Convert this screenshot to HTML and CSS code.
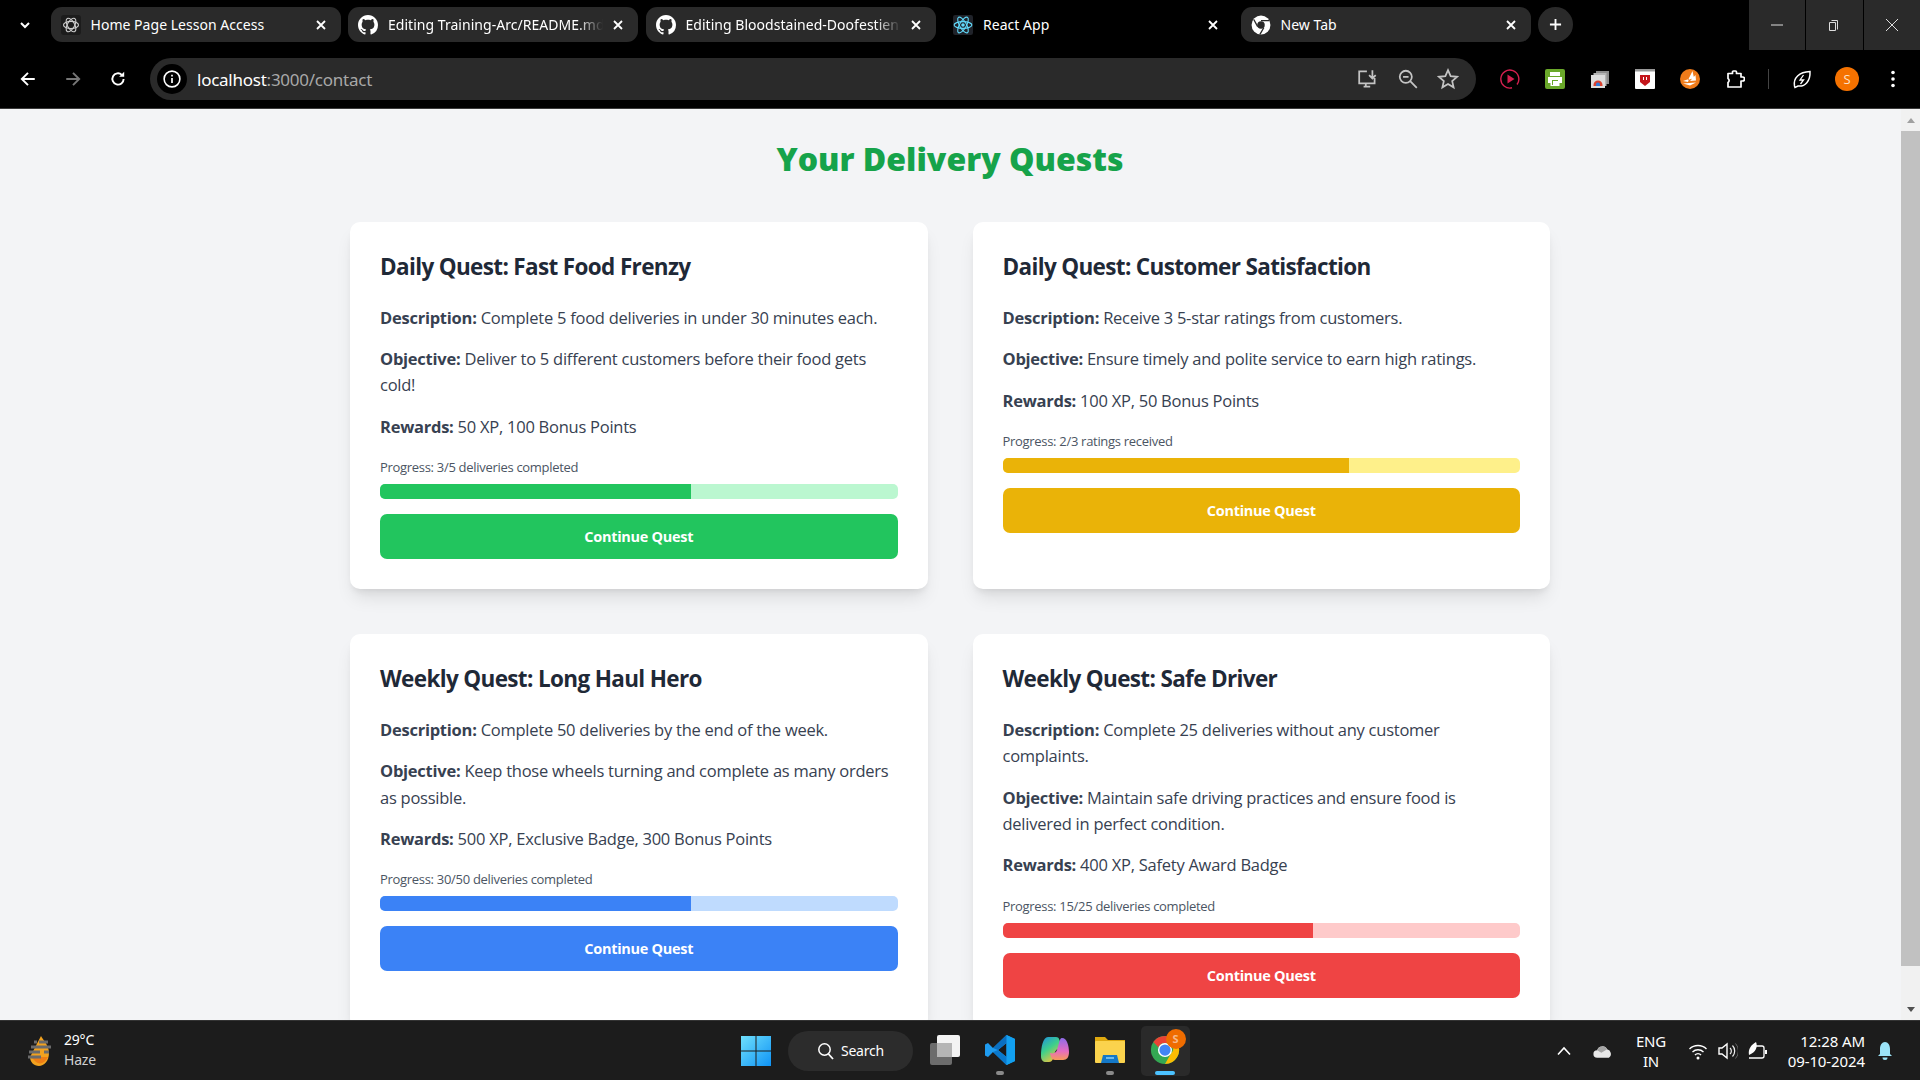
FILE: index.html
```html
<!DOCTYPE html>
<html lang="en">
<head>
<meta charset="utf-8">
<title>React App</title>
<link rel="stylesheet" href="styles.css">
</head>
<body>
<header class="chrome">
  <div class="tabstrip">
    <svg class="tabs-menu" viewBox="0 0 12 12"><path d="M2 4 6 8l4-4" fill="none" stroke="#fff" stroke-width="2"/></svg>
    <div class="tab on">
      <svg class="fav" viewBox="0 0 20 20"><rect width="20" height="20" rx="3" fill="#1c1c1c"/><g fill="none" stroke="#ccc" stroke-width="1.100"><ellipse cx="10" cy="10" rx="7.500" ry="3.600"/><ellipse cx="10" cy="10" rx="7.500" ry="3.600" transform="rotate(60 10 10)"/><ellipse cx="10" cy="10" rx="7.500" ry="3.600" transform="rotate(120 10 10)"/></g></svg>
      <span class="tab-label">Home Page Lesson Access</span><svg class="x" viewBox="0 0 10 10"><path d="M1 1l8 8M9 1 1 9"/></svg>
    </div>
    <div class="tab on">
      <svg class="fav" viewBox="0 0 16 16"><path fill="#fff" d="M8 0C3.580 0 0 3.580 0 8c0 3.540 2.290 6.530 5.470 7.590.4.070.55-.17.55-.38 0-.19-.01-.82-.01-1.490-2.010.37-2.530-.49-2.690-.94-.09-.23-.48-.94-.82-1.130-.28-.15-.68-.52-.01-.53.63-.01 1.080.58 1.230.82.720 1.210 1.870.87 2.330.66.070-.52.280-.87.510-1.070-1.780-.2-3.640-.89-3.640-3.950 0-.87.310-1.590.820-2.150-.08-.2-.360-1.020.080-2.120 0 0 .670-.21 2.200.820.640-.18 1.320-.27 2-.27s1.360.09 2 .27c1.530-1.040 2.200-.82 2.200-.82.440 1.100.160 1.920.080 2.120.510.560.820 1.270.820 2.150 0 3.070-1.870 3.750-3.650 3.950.290.250.540.730.540 1.480 0 1.070-.01 1.930-.01 2.200 0 .210.150.460.550.380A8.010 8.010 0 0 0 16 8c0-4.420-3.580-8-8-8z"/></svg>
      <span class="tab-label fade">Editing Training-Arc/README.md</span><svg class="x" viewBox="0 0 10 10"><path d="M1 1l8 8M9 1 1 9"/></svg>
    </div>
    <div class="tab on">
      <svg class="fav" viewBox="0 0 16 16"><path fill="#fff" d="M8 0C3.580 0 0 3.580 0 8c0 3.540 2.290 6.530 5.470 7.590.4.070.55-.17.55-.38 0-.19-.01-.82-.01-1.490-2.010.37-2.530-.49-2.690-.94-.09-.23-.48-.94-.82-1.130-.28-.15-.68-.52-.01-.53.63-.01 1.080.58 1.230.82.720 1.210 1.870.87 2.330.66.070-.52.280-.87.510-1.070-1.780-.2-3.640-.89-3.640-3.950 0-.87.310-1.590.820-2.150-.08-.2-.360-1.020.080-2.120 0 0 .670-.21 2.200.820.640-.18 1.320-.27 2-.27s1.360.09 2 .27c1.530-1.040 2.200-.82 2.200-.82.440 1.100.160 1.920.080 2.120.510.560.820 1.270.820 2.150 0 3.070-1.870 3.750-3.650 3.950.290.250.540.730.540 1.480 0 1.070-.01 1.930-.01 2.200 0 .210.150.460.550.380A8.010 8.010 0 0 0 16 8c0-4.420-3.580-8-8-8z"/></svg>
      <span class="tab-label fade">Editing Bloodstained-Doofestien</span><svg class="x" viewBox="0 0 10 10"><path d="M1 1l8 8M9 1 1 9"/></svg>
    </div>
    <div class="tab">
      <svg class="fav" viewBox="0 0 18 18"><rect width="18" height="18" rx="2" fill="#20232a"/><g fill="none" stroke="#61dafb"><ellipse cx="9" cy="9" rx="8" ry="3"/><ellipse cx="9" cy="9" rx="8" ry="3" transform="rotate(60 9 9)"/><ellipse cx="9" cy="9" rx="8" ry="3" transform="rotate(120 9 9)"/></g><circle cx="9" cy="9" r="1.600" fill="#61dafb"/></svg>
      <span class="tab-label">React App</span><svg class="x" viewBox="0 0 10 10"><path d="M1 1l8 8M9 1 1 9"/></svg>
    </div>
    <div class="tab on">
      <svg class="fav" viewBox="0 0 18 18"><circle cx="9" cy="9" r="8.500" fill="#fff"/><circle cx="9" cy="9" r="3.400" fill="#2a2a2a"/><path d="M9 5h7.500M6 10.500 2.500 4M11.500 11.500 8 17.500" stroke="#2a2a2a" stroke-width="1.200"/></svg>
      <span class="tab-label">New Tab</span><svg class="x" viewBox="0 0 10 10"><path d="M1 1l8 8M9 1 1 9"/></svg>
    </div>
    <div class="newtab"><svg viewBox="0 0 14 14"><path d="M7 1v12M1 7h12" stroke="#fff" stroke-width="2"/></svg></div>
    <div class="winbtns">
      <div class="winbtn"><svg viewBox="0 0 14 14"><path d="M1 7h12" stroke="#ddd"/></svg></div>
      <div class="winbtn"><svg viewBox="0 0 14 14"><path d="M4.500 2.500h6v9M2.500 4.500h6v8h-6z" fill="none" stroke="#ddd"/></svg></div>
      <div class="winbtn"><svg viewBox="0 0 14 14"><path d="M1 1l12 12M13 1 1 13" stroke="#ddd"/></svg></div>
    </div>
  </div>
  <div class="toolbar">
    <svg class="nav" viewBox="0 0 16 16"><path d="M14 8H2.500M8 2.500 2.500 8 8 13.500" fill="none" stroke="#fff" stroke-width="1.700"/></svg>
    <svg class="nav" viewBox="0 0 16 16"><path d="M2 8h11.500M8 2.500 13.500 8 8 13.500" fill="none" stroke="#777" stroke-width="1.700"/></svg>
    <svg class="nav" viewBox="0 0 16 16"><path d="M13 8a5 5 0 1 1-1.600-3.700" fill="none" stroke="#fff" stroke-width="1.700"/><path d="M13.500 1.500v4.500H9z" fill="#fff"/></svg>
    <div class="omnibox">
      <div class="site-info"><svg viewBox="0 0 16 16"><circle cx="8" cy="8" r="7" fill="none" stroke="#fff" stroke-width="1.400"/><path d="M8 7v4.500M8 4.300v1.500" stroke="#fff" stroke-width="1.500"/></svg></div>
      <span class="url">localhost<span class="url-dim">:3000/contact</span></span>
      <div class="omni-actions">
        <svg viewBox="0 0 20 20"><path d="M9 3H2v11h14v-5M6 17h6M8 14v3M14 2v7M11 6.500 14 9.500l3-3" fill="none" stroke="#c4c4c4" stroke-width="1.600"/></svg>
        <svg viewBox="0 0 20 20"><circle cx="8" cy="8" r="5.500" fill="none" stroke="#c4c4c4" stroke-width="1.600"/><path d="M12 12l6 6M5.500 8h5" stroke="#c4c4c4" stroke-width="1.600"/></svg>
        <svg viewBox="0 0 20 20"><path d="M10 2l2.400 5.400 5.800.6-4.400 3.900 1.300 5.700-5.100-3-5.100 3 1.300-5.700L1.800 8l5.800-.6z" fill="none" stroke="#c4c4c4" stroke-width="1.600"/></svg>
      </div>
    </div>
    <div class="exts">
      <svg viewBox="0 0 20 20"><path d="M12 18.800A9 9 0 1 1 17 15.500" fill="none" stroke="#d3204f" stroke-width="1.400"/><path d="M7.500 5.500 14.500 10l-7 4.500z" fill="#d3204f"/></svg>
      <svg viewBox="0 0 20 20"><rect width="20" height="20" rx="2" fill="#6aa82a"/><path d="M5 3h10v4H5zM3 8h14v6h-2.500v3h-9v-3H3z" fill="#fff"/><path d="M7 11h6v5H7z" fill="#6aa82a"/><path d="M8 12h5v5H8z" fill="#fff"/></svg>
      <svg viewBox="0 0 20 20"><rect x="6" y="2" width="13" height="13" fill="#8d8d8d"/><rect x="3.500" y="4" width="13" height="13" fill="#b5b5b5"/><rect x="1" y="6" width="14" height="13" fill="#ddd"/><path d="M3.500 16a4.500 4.500 0 0 1 9 0v1h-9z" fill="#d9412f"/><path d="M6 17v-1.500a2 2 0 0 1 4 0V17z" fill="#2f7bd9"/></svg>
      <svg viewBox="0 0 20 20"><rect width="20" height="20" rx="1" fill="#fff"/><rect width="20" height="2.500" fill="#999"/><path d="M5 6h10v7l-5 4-5-4z" fill="#c4161c"/><path d="M8 8h1v3H8zM11 8h1v3h-1z" fill="#fff"/></svg>
      <svg viewBox="0 0 20 20"><circle cx="10" cy="10" r="10" fill="#ef7b1a"/><path d="M12.500 2 8 11l6-2zM15.500 6 10 12l6-.5zM3 12l6-2-1 3zM3 14.500l13-1-6 3z" fill="#fff"/></svg>
      <svg viewBox="0 0 20 20"><path d="M3 4.500h4.500V3a1 1 0 0 1 1-1h2a1 1 0 0 1 1 1v1.500H16V8h1.500a2 2 0 0 1 0 4H16v6H3v-4.500c1.500-1 1.500-3 0-4z" fill="none" stroke="#fff" stroke-width="1.700" stroke-linejoin="round"/></svg>
      <span class="ext-sep"></span>
      <svg viewBox="0 0 20 20"><path d="M2.500 17C1 9 7 3 18 2.500 18.500 12 13 18 6 17l-3 1.500z" fill="none" stroke="#fff" stroke-width="1.500"/><path d="M11.500 6 8 11h3.500L8.500 15" fill="none" stroke="#fff" stroke-width="1.300"/></svg>
      <span class="avatar">S</span>
      <svg class="kebab" viewBox="0 0 6 20"><circle cx="3" cy="3.500" r="1.800" fill="#fff"/><circle cx="3" cy="10" r="1.800" fill="#fff"/><circle cx="3" cy="16.500" r="1.800" fill="#fff"/></svg>
    </div>
  </div>
</header>

<div class="viewport">
  <main class="page">
    <h1 class="page-title">Your Delivery Quests</h1>
    <div class="quests">
      <article class="card">
        <h2 class="card-title">Daily Quest: Fast Food Frenzy</h2>
        <p class="line"><strong>Description:</strong> Complete 5 food deliveries in under 30 minutes each.</p>
        <p class="line"><strong>Objective:</strong> Deliver to 5 different customers before their food gets cold!</p>
        <p class="line"><strong>Rewards:</strong> 50 XP, 100 Bonus Points</p>
        <p class="progress-label">Progress: 3/5 deliveries completed</p>
        <div class="track green-t"><div class="fill green" style="width:60%"></div></div>
        <button class="cta green">Continue Quest</button>
      </article>
      <article class="card">
        <h2 class="card-title">Daily Quest: Customer Satisfaction</h2>
        <p class="line"><strong>Description:</strong> Receive 3 5-star ratings from customers.</p>
        <p class="line"><strong>Objective:</strong> Ensure timely and polite service to earn high ratings.</p>
        <p class="line"><strong>Rewards:</strong> 100 XP, 50 Bonus Points</p>
        <p class="progress-label">Progress: 2/3 ratings received</p>
        <div class="track yellow-t"><div class="fill yellow" style="width:67%"></div></div>
        <button class="cta yellow">Continue Quest</button>
      </article>
      <article class="card">
        <h2 class="card-title">Weekly Quest: Long Haul Hero</h2>
        <p class="line"><strong>Description:</strong> Complete 50 deliveries by the end of the week.</p>
        <p class="line"><strong>Objective:</strong> Keep those wheels turning and complete as many orders as possible.</p>
        <p class="line"><strong>Rewards:</strong> 500 XP, Exclusive Badge, 300 Bonus Points</p>
        <p class="progress-label">Progress: 30/50 deliveries completed</p>
        <div class="track blue-t"><div class="fill blue" style="width:60%"></div></div>
        <button class="cta blue">Continue Quest</button>
      </article>
      <article class="card">
        <h2 class="card-title">Weekly Quest: Safe Driver</h2>
        <p class="line"><strong>Description:</strong> Complete 25 deliveries without any customer complaints.</p>
        <p class="line"><strong>Objective:</strong> Maintain safe driving practices and ensure food is delivered in perfect condition.</p>
        <p class="line"><strong>Rewards:</strong> 400 XP, Safety Award Badge</p>
        <p class="progress-label">Progress: 15/25 deliveries completed</p>
        <div class="track red-t"><div class="fill red" style="width:60%"></div></div>
        <button class="cta red">Continue Quest</button>
      </article>
    </div>
  </main>
  <aside class="scrollbar">
    <span class="arrow up"></span>
    <div class="thumb"></div>
    <span class="arrow down"></span>
  </aside>
</div>

<footer class="taskbar">
  <div class="weather">
    <svg viewBox="0 0 26 32"><path d="M14 1c2 4 8 9 8 17s-5 13-10 13S3 27 3 22z" fill="#f2a21f"/><path d="M9 27c4 3 9 1 12-5H4z" fill="#ef7d14"/><path d="M7 7h3M12 7h9M4 12h20M2 17h11M17 17h5M1 22h13" stroke="#6b6b6b" stroke-width="3"/></svg>
    <div class="weather-text"><span>29°C</span><span class="dim">Haze</span></div>
  </div>
  <div class="task-center">
    <svg class="start" viewBox="0 0 30 30"><defs><linearGradient id="win" x1="0" y1="0" x2="1" y2="1"><stop offset="0" stop-color="#6fe0fc"/><stop offset="1" stop-color="#0f93f5"/></linearGradient></defs><path fill="url(#win)" d="M0 0h14.500v14.500H0zM15.500 0H30v14.500H15.500zM0 15.500h14.500V30H0zM15.500 15.500H30V30H15.500z"/></svg>
    <div class="search"><svg viewBox="0 0 18 18"><circle cx="7.500" cy="7.500" r="5.700" fill="none" stroke="#fff" stroke-width="1.500"/><path d="M11.500 12l4.500 5" stroke="#fff" stroke-width="1.800"/></svg><span>Search</span></div>
    <div class="task-app"><svg viewBox="0 0 30 30"><rect x="0" y="8" width="22" height="22" rx="2" fill="#6c6c6c"/><rect x="7" y="0" width="23" height="22" rx="2" fill="#f3f3f3"/><rect x="7" y="8" width="15" height="14" fill="#b5b5b5"/></svg></div>
    <div class="task-app"><svg viewBox="0 0 30 30"><path d="M21.500 0 30 4v22l-8.500 4L8 17l-5 5-3-1.500v-11L3 8l5 5z" fill="#1f9cf0"/><path d="M21.500 8 13 15l8.500 7z" fill="#1a1a1a"/><path d="M21.500 0 30 4v22l-8.500 4z" fill="#12a0f0"/><path d="M21.500 0v8L13 15 8 13z" fill="#0a6fc0"/><path d="M21.500 30v-8L13 15l-5 2z" fill="#0a78cc"/></svg><i class="dot"></i></div>
    <div class="task-app"><svg viewBox="0 0 30 30"><defs><linearGradient id="cpa" x1="0" y1="0" x2=".6" y2="1"><stop offset="0" stop-color="#1d8fe0"/><stop offset=".5" stop-color="#3fd08a"/><stop offset="1" stop-color="#f5c33b"/></linearGradient><linearGradient id="cpb" x1=".5" y1="0" x2=".5" y2="1"><stop offset="0" stop-color="#8e6be8"/><stop offset=".6" stop-color="#e56cc0"/><stop offset="1" stop-color="#f79a5a"/></linearGradient></defs><path d="M8 2h8c2 0 3 1 3.500 3L22 14c-3-1-6 0-7 3l-2 7c-1 2-2 3-4 3H6c-3 0-5-2-5-6C1 12 3 2 8 2z" fill="url(#cpa)"/><path d="M22 3c5 0 7 8 7 14 0 5-2 8-6 8h-8c-2 0-3-1-4-3l-1-4c3 1 6 0 7-3l2-7c.5-3 1.500-5 3-5z" fill="url(#cpb)"/></svg></div>
    <div class="task-app"><svg viewBox="0 0 30 30"><path d="M0 2h10l3 3h17v22H0z" fill="#e0a90f"/><rect y="6" width="30" height="22" rx="1" fill="#fbd34d"/><path d="M8 20h14l2 8H6z" fill="#1478c7"/><path d="M11 23h8" stroke="#8fd0f5" stroke-width="1.500"/></svg><i class="dot"></i></div>
    <div class="task-app active"><svg class="chrome-logo" viewBox="0 0 32 32"><circle cx="16" cy="16" r="15" fill="#34a853"/><path d="M16 1a15 15 0 0 1 13 7.500H16a7.500 7.500 0 0 0-7 4.500L3.500 7.500A15 15 0 0 1 16 1z" fill="#ea4335"/><path d="M29 8.500A15 15 0 0 1 16 31l6.500-11.500a7.500 7.500 0 0 0 0-11z" fill="#fbbc04"/><circle cx="16" cy="16" r="7.500" fill="#fff"/><circle cx="16" cy="16" r="6" fill="#4285f4"/></svg><span class="task-badge">S</span><i class="bar"></i></div>
  </div>
  <div class="tray">
    <svg class="chev" viewBox="0 0 14 14"><path d="M1 10.500 7 4l6 6.500" fill="none" stroke="#fff" stroke-width="1.600"/></svg>
    <svg class="cloud" viewBox="0 0 24 18"><path d="M5 17a4.500 4.500 0 0 1 0-9 6.500 6.500 0 0 1 12-1 5.500 5.500 0 0 1 2 10z" fill="#e8e8e8"/><path d="M5 8a6.500 6.500 0 0 1 12-1l-7 4z" fill="#a5a5a5"/></svg>
    <div class="lang"><span>ENG</span><span>IN</span></div>
    <svg class="sys" viewBox="0 0 20 20"><path d="M1.500 8a12 12 0 0 1 17 0M4.500 11a8 8 0 0 1 11 0M7 14a4 4 0 0 1 6 0" fill="none" stroke="#fff" stroke-width="1.400"/><circle cx="10" cy="17" r="1.500" fill="#fff"/></svg>
    <svg class="sys" viewBox="0 0 20 20"><path d="M1 7h3l5-4v14l-5-4H1z" fill="none" stroke="#fff" stroke-width="1.400"/><path d="M12 7a4 4 0 0 1 0 6M14.500 4.500a8 8 0 0 1 0 11" fill="none" stroke="#eee" stroke-width="1.200"/><path d="M17.500 2.500a11 11 0 0 1 0 15" fill="none" stroke="#666"/></svg>
    <svg class="sys" viewBox="0 0 20 20"><path d="M6 5h8a2 2 0 0 1 2 2v8a2 2 0 0 1-2 2H1" fill="none" stroke="#fff" stroke-width="1.300"/><path d="M17 9h2v4h-2zM1 14C0 8 3 4 8 1c2 5 0 10-7 13z" fill="#fff"/></svg>
    <div class="clock"><span>12:28 AM</span><span>09-10-2024</span></div>
    <svg class="bell" viewBox="0 0 16 20"><path d="M8 1c3 0 5 3 5 7v5l2 2H1l2-2V8c0-4 2-7 5-7z" fill="#9be3f7"/><path d="M5.500 16.500h5a2.500 2.500 0 0 1-5 0z" fill="#9be3f7"/></svg>
  </div>
</footer>
</body>
</html>
```
FILE: styles.css
```css
* { box-sizing: border-box; }
html, body { margin: 0; height: 100%; overflow: hidden; }
body {
  display: flex;
  flex-direction: column;
  height: 1080px;
  font-family: "Open Sans", "Noto Sans", "Liberation Sans", sans-serif;
  background: #000;
}

/* Browser chrome */
.chrome { height: 109px; flex: none; background: #000; color: #fff; border-bottom: 1px solid #3a3a3a; }
.tabstrip { height: 50px; display: flex; align-items: flex-start; padding: 7px 0 0 19px; gap: 7.500px; position: relative; }
.tabs-menu { width: 12px; height: 12px; margin: 12px 12px 0 0; flex: none; }
.tab { width: 290px; height: 35px; border-radius: 11px; display: flex; align-items: center; padding: 0 15px 0 10px; gap: 10px; font-size: 14px; flex: none; }
.tab.on { background: #2a2a2a; }
.fav { width: 20px; height: 20px; flex: none; }
.tab-label { flex: 1; white-space: nowrap; overflow: hidden; font-family: "Noto Sans", sans-serif; font-size: 14px; letter-spacing: .03px; }
.tab-label.fade { -webkit-mask-image: linear-gradient(90deg, #000 88%, transparent 100%); mask-image: linear-gradient(90deg, #000 88%, transparent 100%); }
.x { width: 10px; height: 10px; flex: none; fill: none; stroke: #fff; stroke-width: 1.800; }
.newtab { width: 35px; height: 35px; border-radius: 50%; background: #2a2a2a; display: flex; align-items: center; justify-content: center; flex: none; }
.newtab svg { width: 13px; height: 13px; }
.winbtns { margin-left: auto; margin-top: -7px; display: flex; gap: 1px; }
.winbtn { width: 56.500px; height: 50px; background: #2a2a2a; display: flex; align-items: center; justify-content: center; }
.winbtn svg { width: 14px; height: 14px; }

.toolbar { height: 58px; display: flex; align-items: flex-start; padding: 8px 0 0 19px; }
.nav { width: 18px; height: 18px; flex: none; margin: 12px 27px 0 0; }
.nav:nth-child(3) { margin-right: 23px; }
.omnibox { width: 1326px; height: 42px; background: #2a2a2a; border-radius: 21px; display: flex; align-items: center; padding: 0 11px 0 7px; flex: none; }
.site-info { width: 30px; height: 30px; border-radius: 50%; background: #000; display: flex; align-items: center; justify-content: center; flex: none; }
.site-info svg { width: 18px; height: 18px; }
.url { margin-left: 10px; font-family: "Noto Sans", sans-serif; font-size: 17px; letter-spacing: -.25px; color: #fff; }
.url-dim { color: #a8a8a8; }
.omni-actions { margin-left: auto; display: flex; gap: 18px; padding-right: 6px; }
.omni-actions svg { width: 22px; height: 22px; }
.exts { flex: 1; display: flex; align-items: center; height: 42px; padding-left: 24px; gap: 25px; }
.exts svg { width: 20px; height: 20px; flex: none; }
.ext-sep { width: 1px; height: 20px; background: #444; flex: none; margin: 0 -2px; }
.avatar { width: 24px; height: 24px; border-radius: 50%; background: #f57200; color: #fbe3cc; font-size: 13px; display: flex; align-items: center; justify-content: center; flex: none; margin: 0 -2px; }
.exts .kebab { width: 6px; margin-left: 8px; }

/* Page */
.viewport { flex: 1; min-height: 0; display: flex; background: #f3f4f6; overflow: hidden; }
.page { flex: 1; min-width: 0; padding-right: 1px; }
.page-title { margin: 30px 0 43px; text-align: center; font-size: 32px; line-height: 40px; font-weight: 800; color: #16a34a; }
.quests { width: 1200px; margin: 0 auto; display: grid; grid-template-columns: 1fr 1fr; gap: 45px; }
.card { background: #fff; border-radius: 10px; padding: 30px; box-shadow: 0 12px 18px -4px rgba(0,0,0,.1), 0 5px 7px -3px rgba(0,0,0,.08); }
.card-title { margin: 0 0 22.500px; font-size: 22.500px; line-height: 30px; font-weight: 700; color: #1f2937; letter-spacing: -.65px; }
.line { margin: 0 0 15.250px; font-size: 16.500px; line-height: 26.300px; color: #374151; letter-spacing: -.25px; }
.line strong { font-weight: 700; }
.progress-label { margin: 17px 0 0; font-size: 13px; line-height: 20px; color: #4b5563; letter-spacing: -.3px; }
.track { height: 15px; border-radius: 5px; margin-top: 7px; overflow: hidden; }
.fill { height: 100%; }
.cta { display: block; width: 100%; height: 45px; margin-top: 15px; border: 0; border-radius: 7px; color: #fff; font: 700 14.500px "Open Sans", sans-serif; letter-spacing: -.3px; }
.green { background: #22c55e; } .green-t { background: #bbf7d0; }
.yellow { background: #eab308; } .yellow-t { background: #fef08a; }
.blue { background: #3b82f6; } .blue-t { background: #bfdbfe; }
.red { background: #ef4444; } .red-t { background: #fecaca; }

.scrollbar { width: 19px; flex: none; background: #f1f1f1; display: flex; flex-direction: column; align-items: center; }
.thumb { width: 100%; height: 835px; background: #c1c1c1; margin-top: 8px; flex: none; }
.arrow { width: 0; height: 0; flex: none; border-left: 4px solid transparent; border-right: 4px solid transparent; }
.arrow.up { border-bottom: 5px solid #a0a0a0; margin-top: 9px; }
.arrow.down { border-top: 5px solid #505050; margin-top: 41px; }

/* Taskbar */
.taskbar { height: 60px; flex: none; background: #1c1c1c; border-top: 1px solid #333; color: #fff; display: flex; align-items: center; position: relative; font-family: "Noto Sans", sans-serif; }
.weather { display: flex; align-items: center; padding-left: 24px; gap: 8px; width: 400px; }
.weather svg { width: 32px; height: 32px; flex: none; }
.weather-text { display: flex; flex-direction: column; font-size: 14px; line-height: 20px; letter-spacing: -.2px; margin-top: -2px; }
.dim { color: #d0d0d0; }
.task-center { position: absolute; left: 741px; top: 0; height: 59px; display: flex; align-items: center; }
.start { width: 30px; height: 30px; margin-right: 17px; }
.search { width: 125px; height: 40px; border-radius: 20px; background: #2c2c2c; display: flex; align-items: center; justify-content: center; gap: 6px; font-size: 14px; margin-right: 4.500px; letter-spacing: -.2px; }
.search svg { width: 18px; height: 18px; }
.task-app { width: 55px; height: 50px; display: flex; align-items: center; justify-content: center; position: relative; border-radius: 5px; }
.task-app svg { width: 30px; height: 30px; margin-top: -2px; }
.task-app.active { background: #2a2a2a; width: 49px; margin-left: 3px; }
.dot { position: absolute; bottom: 1px; left: 50%; width: 8px; height: 4px; margin-left: -4px; border-radius: 2px; background: #8a8a8a; }
.bar { position: absolute; bottom: 1px; left: 50%; width: 20px; height: 4px; margin-left: -10px; border-radius: 2px; background: #4cc2ff; }
.task-badge { position: absolute; right: 4px; top: 3px; width: 20px; height: 20px; border-radius: 50%; background: #ef6c00; color: #f5b98a; font-size: 11px; font-weight: 700; display: flex; align-items: center; justify-content: center; }
.tray { margin-left: auto; display: flex; align-items: center; height: 100%; padding-right: 27px; }
.chev { width: 14px; height: 14px; margin-right: 22px; }
.cloud { width: 20px; height: 16px; margin-right: 20px; }
.lang { display: flex; flex-direction: column; align-items: center; font-size: 15px; line-height: 20px; width: 36px; margin-right: 19px; letter-spacing: -.2px; }
.sys { width: 20px; height: 20px; margin-right: 10px; }
.clock { display: flex; flex-direction: column; align-items: flex-end; font-size: 15px; line-height: 20px; margin-left: 10px; width: 77px; white-space: nowrap; letter-spacing: -.1px; }
.bell { width: 16px; height: 20px; margin-left: 12px; flex: none; }
```
